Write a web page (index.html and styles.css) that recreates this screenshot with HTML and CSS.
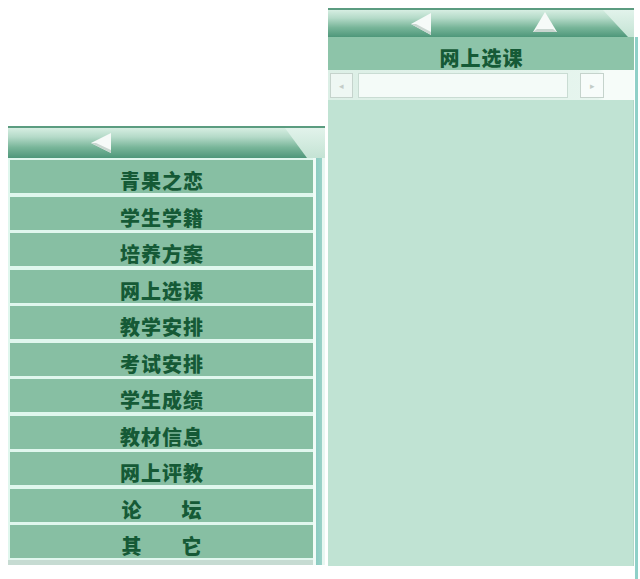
FILE: index.html
```html
<!DOCTYPE html>
<html>
<head>
	<title>网上选课</title>
	<meta charset="utf-8">
	<link rel="stylesheet" href="styles.css">
</head>
<body>
	<div class="page">
		<!--左侧菜单-->
		<div class="left">
			<div class="tabbar">
				<div class="tab">
					<svg class="arrow" width="22" height="20" viewBox="0 0 22 20"><polygon points="21,0 21,20 1,10" fill="#f6faf8"/><polygon points="1,10 21,20 21,17 6,10" fill="#c9d6d0"/></svg>
				</div>
			</div>
			<div class="menuwrap">
				<ul class="menu">
					<li>青果之恋</li>
					<li>学生学籍</li>
					<li>培养方案</li>
					<li>网上选课</li>
					<li>教学安排</li>
					<li>考试安排</li>
					<li>学生成绩</li>
					<li>教材信息</li>
					<li>网上评教</li>
					<li class="wide">论坛</li>
					<li class="wide">其它</li>
				</ul>
				<div class="vscroll"></div>
			</div>
		</div>
		<!--右侧内容-->
		<div class="right">
			<div class="tabbar tabbar-r">
				<div class="tab">
					<svg class="arrow" width="22" height="22" viewBox="0 0 22 22"><polygon points="21,0 21,22 1,11" fill="#f6faf8"/><polygon points="1,11 21,22 21,19 6,11" fill="#c9d6d0"/></svg>
					<svg class="arrow up" width="24" height="20" viewBox="0 0 24 20"><polygon points="12,0 24,20 0,20" fill="#f6faf8"/><polygon points="0,20 24,20 20,17 4,17" fill="#c9d6d0"/></svg>
				</div>
			</div>
			<div class="title">网上选课</div>
			<div class="hscroll">
				<span class="btn">&#9666;</span>
				<span class="track"></span>
				<span class="btn btn-r">&#9656;</span>
			</div>
			<div class="content"></div>
		</div>
		<div class="edge"></div>
	</div>
</body>
</html>
```
FILE: styles.css
```css
*{
	margin:0;
	padding:0;
	list-style:none;
	box-sizing:border-box;
}
body{
	background:#fff;
	font-family:"Noto Sans CJK SC","Noto Sans",sans-serif;
}
.page{
	display:flex;
	align-items:flex-start;
	width:640px;
	height:579px;
	overflow:hidden;
}
.left{
	width:317px;
	margin:126px 0 0 8px;
}
.tabbar{
	height:32px;
	border-top:2px solid #5b9c80;
	background:linear-gradient(to bottom,#e2f3eb,#c4e3d4);
}
.tab{
	display:flex;
	align-items:center;
	height:100%;
	clip-path:polygon(0 0,277px 0,299px 100%,0 100%);
	background:linear-gradient(to bottom,#d6eee2 0%,#b4dac8 30%,#78b599 65%,#4e977a 100%);
}
.tab .arrow{
	margin-left:82px;
}
.menuwrap{
	display:flex;
	height:407px;
}
.menu{
	width:305px;
	padding:2px 0 2px 2px;
	background:#e0f7ee;
	border-bottom:5px solid #c6dbd2;
}
.menu li{
	height:33px;
	margin-bottom:3.5px;
	padding-top:8px;
	background:#87bfa3;
	color:#155a36;
	font-size:20px;
	font-weight:900;
	line-height:25px;
	text-align:center;
	letter-spacing:1px;
	text-indent:1px;
}
.menu li:last-child{
	margin-bottom:0;
}
.menu .wide{
	letter-spacing:40px;
	text-indent:40px;
}
.vscroll{
	width:12px;
	background:linear-gradient(to right,#f0fbf7 0,#f0fbf7 3px,#8ccbc1 3px,#9ad2c8 9px,#e8f7f1 9px);
}
.right{
	width:306px;
	margin:8px 0 0 3px;
}
.tabbar-r{
	height:29px;
}
.tabbar-r .tab{
	clip-path:polygon(0 0,275px 0,300px 100%,0 100%);
}
.tabbar-r .arrow{
	margin-left:82px;
}
.tabbar-r .arrow.up{
	margin-left:101px;
	margin-top:-4px;
}
.title{
	height:33px;
	padding-top:8px;
	background:#8dc4a9;
	color:#155a36;
	font-size:20px;
	font-weight:900;
	line-height:25px;
	text-align:center;
	letter-spacing:1px;
	text-indent:1px;
}
.hscroll{
	display:flex;
	align-items:center;
	height:30px;
	padding-left:2px;
	background:linear-gradient(to right,#dcefe6 0,#e6f5ee 270px,#f6fcf9 276px);
}
.hscroll .btn{
	width:23px;
	height:25px;
	border:1px solid #c5d3cc;
	background:#eef7f3;
	color:#c3ccc8;
	font-size:9px;
	line-height:23px;
	text-align:center;
}
.hscroll .track{
	width:210px;
	height:25px;
	margin-left:5px;
	border:1px solid #c9dcd3;
	background:#f4fbf8;
}
.hscroll .btn-r{
	width:24px;
	margin-left:12px;
	background:#f7fcfa;
}
.content{
	height:466px;
	background:#c0e3d3;
	border-right:1px solid #b3d8c8;
}
.edge{
	width:3px;
	height:560px;
	margin:37px 0 0 1px;
	background:#8fd0c8;
}
```
